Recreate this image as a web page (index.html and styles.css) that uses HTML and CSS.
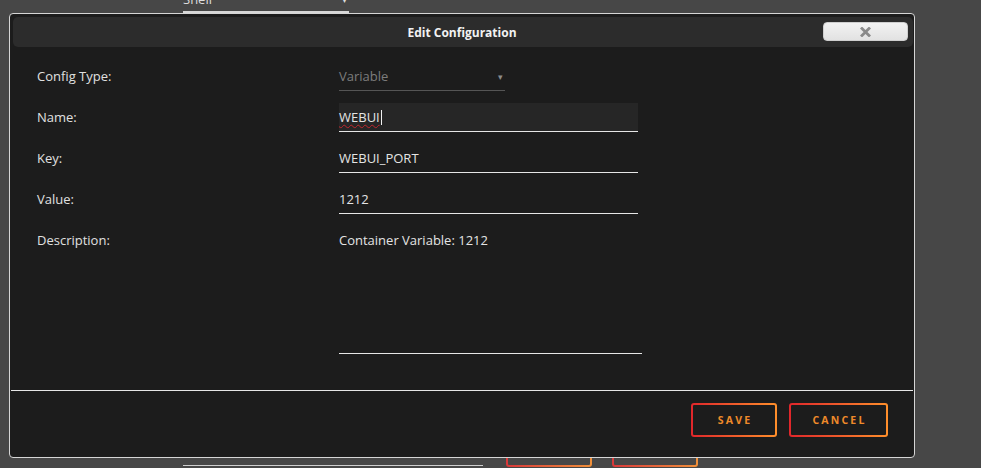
FILE: index.html
```html
<!DOCTYPE html>
<html>
<head>
<meta charset="utf-8">
<link rel="stylesheet" href="styles.css">
</head>
<body>
<div class="page">
  <div class="bg-top">
    <div class="bg-select"><span>Shell</span><span class="bg-arrow">▾</span></div>
  </div>
  <div class="bg-bottom">
    <div class="bg-line"></div>
    <div class="bg-btn"></div>
    <div class="bg-btn"></div>
  </div>
</div>

<div class="dialog">
  <div class="titlebar">
    <div class="title">Edit Configuration</div>
    <button class="close" type="button" aria-label="Close">
      <svg width="11" height="10" viewBox="0 0 11 10"><path d="M2 1.5 L9 8.5 M9 1.5 L2 8.5" stroke="#8a8a8a" stroke-width="2.8" stroke-linecap="square"/></svg>
    </button>
  </div>
  <div class="form">
    <div class="label">Config Type:</div>
    <div class="field select"><span class="placeholder">Variable</span><span class="arrow">▾</span></div>

    <div class="label">Name:</div>
    <div class="field text focused"><span class="spell">WEBUI</span><span class="caret"></span></div>

    <div class="label">Key:</div>
    <div class="field text">WEBUI_PORT</div>

    <div class="label">Value:</div>
    <div class="field text">1212</div>

    <div class="label">Description:</div>
    <div class="field area">Container Variable: 1212</div>
  </div>
  <div class="sep"></div>
  <div class="actions">
    <button class="btn save" type="button">SAVE</button>
    <button class="btn cancel" type="button">CANCEL</button>
  </div>
</div>
</body>
</html>
```

FILE: styles.css
```css
html, body {
  margin: 0;
  padding: 0;
}
body {
  background: #474747;
  width: 981px;
  height: 468px;
  overflow: hidden;
  font-family: "Open Sans", "Noto Sans", sans-serif;
  font-size: 13px;
  color: #e2e2e2;
  position: relative;
}

/* background page */
.page {
  height: 467px;
  display: flex;
  flex-direction: column;
  justify-content: space-between;
}
.bg-top {
  padding-left: 183px;
}
.bg-select {
  width: 166px;
  height: 11px;
  border-bottom: 2px solid #d8d8d8;
  display: flex;
  justify-content: space-between;
  align-items: flex-end;
  overflow: hidden;
  color: #ddd;
  font-size: 13px;
  line-height: 16px;
}
.bg-select span {
  margin-bottom: 4px;
}
.bg-arrow {
  padding-right: 2px;
  font-size: 10px;
}
.bg-bottom {
  padding-left: 183px;
  display: flex;
  align-items: flex-end;
}
.bg-line {
  width: 300px;
  border-bottom: 1px solid #cfcfcf;
  margin-bottom: 1px;
}
.bg-btn {
  width: 86px;
  height: 30px;
  margin-left: 23px;
  box-sizing: border-box;
  border: 2px solid transparent;
  border-radius: 3px;
  background: linear-gradient(#474747, #474747) padding-box,
              linear-gradient(90deg, #d9383a, #f0903a) border-box;
}
.bg-btn + .bg-btn {
  margin-left: 20px;
}

/* dialog */
.dialog {
  position: absolute;
  left: 9px;
  top: 13px;
  width: 906px;
  height: 445px;
  box-sizing: border-box;
  background: #1c1c1c;
  border: 1px solid #d6d6d6;
  border-radius: 4px;
  padding: 3px 1px 0 3px;
  display: flex;
  flex-direction: column;
}
.titlebar {
  height: 30px;
  background: #2c2c2c;
  border-radius: 5px;
  display: flex;
  align-items: center;
  justify-content: center;
  position: relative;
}
.title {
  font-weight: 700;
  font-size: 12px;
  color: #f2f2f2;
  padding-right: 2px;
}
.close {
  position: absolute;
  right: 5px;
  top: 5px;
  width: 85px;
  height: 19px;
  border: 1px solid #cfcfcf;
  border-radius: 4px;
  background: linear-gradient(#f2f2f2, #e2e2e2);
  padding: 0;
  display: flex;
  align-items: center;
  justify-content: center;
}
.close svg {
  display: block;
}

.form {
  display: grid;
  grid-template-columns: 302px auto;
  justify-content: start;
  row-gap: 12px;
  padding: 15px 0 0 24px;
}
.label {
  line-height: 29px;
  color: #e0e0e0;
}
.field {
  height: 28px;
  line-height: 29px;
  border-bottom: 1px solid #e6e6e6;
  color: #e4e4e4;
  box-sizing: content-box;
  white-space: nowrap;
}
.select {
  width: 166px;
  border-bottom-color: #555;
  display: flex;
  justify-content: space-between;
  align-items: center;
}
.placeholder {
  color: #7c7c7c;
}
.arrow {
  color: #8c8c8c;
  font-size: 9px;
  padding-right: 2px;
}
.text {
  width: 299px;
}
.focused {
  background: #262626;
  display: flex;
  align-items: center;
}
.spell {
  text-decoration: underline wavy #c0272d;
  text-decoration-thickness: 1px;
  text-underline-offset: 2px;
}
.caret {
  width: 1px;
  height: 15px;
  background: #f0f0f0;
  margin-left: 1px;
}
.area {
  width: 303px;
  height: 127px;
}

.sep {
  margin: 36px 0 0 -2px;
  border-top: 1px solid #e6e6e6;
}
.actions {
  display: flex;
  justify-content: flex-end;
  gap: 12px;
  padding: 12px 25px 0 0;
}
.btn {
  height: 34px;
  box-sizing: border-box;
  border: 2px solid transparent;
  border-radius: 3px;
  background: linear-gradient(#1c1c1c, #1c1c1c) padding-box,
              linear-gradient(90deg, #e0262b, #ff8f2b) border-box;
  color: #ee8a2a;
  font-family: "Open Sans", "Noto Sans", sans-serif;
  font-weight: 700;
  font-size: 10.5px;
  letter-spacing: 2.2px;
  padding: 0 0 0 2px;
}
.save {
  width: 86px;
}
.cancel {
  width: 99px;
}
```
